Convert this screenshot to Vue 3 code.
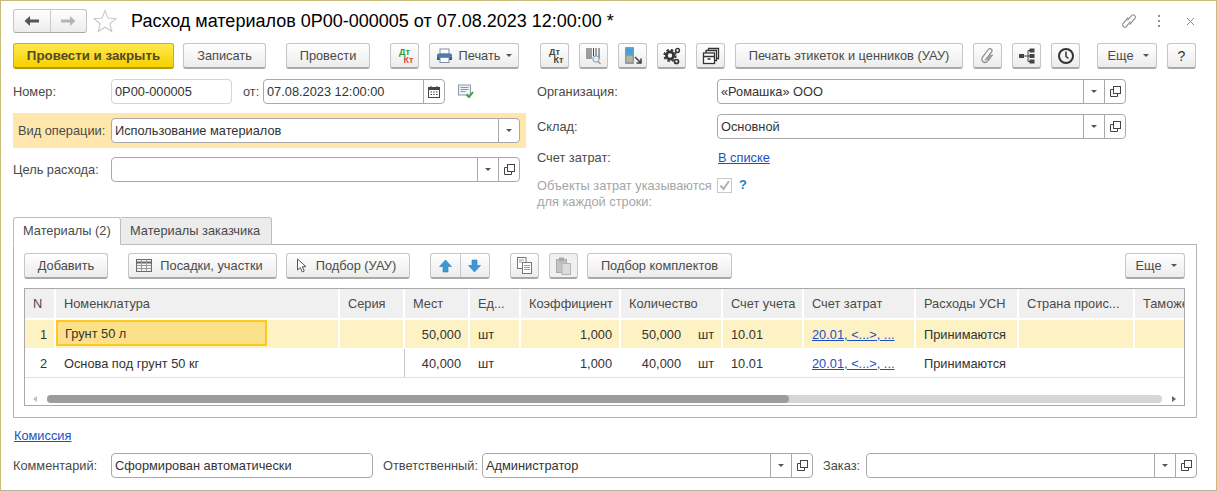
<script setup>
const cols = [
  { key: 'n', title: 'N', w: 31, cls: 'c-n' },
  { key: 'nom', title: 'Номенклатура', w: 284 },
  { key: 'ser', title: 'Серия', w: 65 },
  { key: 'mest', title: 'Мест', w: 65, align: 'r' },
  { key: 'ed', title: 'Ед...', w: 51 },
  { key: 'kf', title: 'Коэффициент', w: 100, align: 'r' },
  { key: 'qty', title: 'Количество', w: 102, kind: 'qty' },
  { key: 'su', title: 'Счет учета', w: 81 },
  { key: 'sz', title: 'Счет затрат', w: 112, kind: 'link' },
  { key: 'us', title: 'Расходы УСН', w: 103 },
  { key: 'st', title: 'Страна проис...', w: 116 },
  { key: 'tm', title: 'Таможе', w: 60 }
]
const template = cols.map(c => c.w + 'px').join(' ')
const rows = [
  { n: '1', nom: 'Грунт 50 л', ser: '', mest: '50,000', ed: 'шт', kf: '1,000', qty: '50,000', su: '10.01', sz: '20.01, <...>, ...', us: 'Принимаются', st: '', tm: '' },
  { n: '2', nom: 'Основа под грунт 50 кг', ser: '', mest: '40,000', ed: 'шт', kf: '1,000', qty: '40,000', su: '10.01', sz: '20.01, <...>, ...', us: 'Принимаются', st: '', tm: '' }
]
</script>

<template>
  <div class="page">
    <header class="titlebar">
      <div class="nav">
        <span class="nav-b">
          <svg width="16" height="12" viewBox="0 0 16 12"><path d="M0.5 6 6 1v3.4h9v3.2H6V11z" fill="#555"/></svg>
        </span>
        <span class="nav-b nav-r">
          <svg width="16" height="12" viewBox="0 0 16 12"><path d="M15.5 6 10 1v3.4H1v3.2h9V11z" fill="#b5b5b5"/></svg>
        </span>
      </div>
      <svg class="star" width="24" height="24" viewBox="0 0 24 24"><path d="M12 1.5l3 7.6 8 .6-6.200 5 2 7.800L12 18.200 5.200 22.500l2-7.800L1 9.700l8-.6z" fill="#fff" stroke="#c9c9c9" stroke-width="1.100"/></svg>
      <h1 class="title">Расход материалов 0Р00-000005 от 07.08.2023 12:00:00 *</h1>
      <div class="win-icons">
        <svg width="16" height="18" viewBox="0 0 16 18" fill="none" stroke="#8a8a8a" stroke-width="1.100"><path d="M6.500 8.500 10.800 3.300a2.200 2.200 0 0 1 3.300 2.800L8.700 12.600M9.500 9.500 5.200 14.700a2.200 2.200 0 0 1-3.300-2.800L7.300 5.400"/></svg>
        <svg class="dots" width="4" height="14" viewBox="0 0 4 14" fill="#8f8f8f"><rect x="1" y="1" width="2" height="2"/><rect x="1" y="6" width="2" height="2"/><rect x="1" y="11" width="2" height="2"/></svg>
        <svg class="close" width="9" height="9" viewBox="0 0 9 9" stroke="#8a8a8a" stroke-width="1"><path d="M1 1l7 7M8 1l-7 7"/></svg>
      </div>
    </header>

    <nav class="cmdbar">
      <button class="btn primary w-post">Провести и закрыть</button>
      <button class="btn w-save ml9">Записать</button>
      <button class="btn w-conduct ml20">Провести</button>
      <button class="btn ib ml20">
        <span class="dk"><i class="dk-g">Дт</i><i class="dk-r">Кт</i></span>
      </button>
      <button class="btn w-print ml10">
        <svg width="17" height="16" viewBox="0 0 17 16"><rect x="4" y="1" width="9" height="5" fill="#fff" stroke="#7a8ea5"/><rect x="1" y="5.500" width="15" height="6.500" rx="1.500" fill="#4e7ba8"/><rect x="1" y="9.500" width="15" height="2.500" fill="#2e5a88"/><rect x="4" y="9.500" width="9" height="5" fill="#fff" stroke="#7a8ea5"/></svg>
        <span class="pl6">Печать</span><span class="caret cm"></span>
      </button>
      <button class="btn ib ml21">
        <span class="dk dk-b"><i>Дт</i><i>Кт</i></span>
      </button>
      <button class="btn ib ml10">
        <svg width="16" height="18" viewBox="0 0 16 18"><path d="M1 1v11M3 1v11M5 1v11M7.500 1v8M10 1v8M13 1v11" stroke="#444" fill="none"/><circle cx="10" cy="12" r="3.200" fill="#e4eef6" stroke="#7c9cb8"/><path d="M12 14.500l2.500 2.500" stroke="#c79a4c" stroke-width="1.600"/></svg>
      </button>
      <button class="btn ib ml10">
        <svg width="20" height="20" viewBox="0 0 20 20"><rect x="2" y="1" width="9" height="17" rx="1" fill="#8d9aa5"/><rect x="3" y="2.500" width="7" height="6" fill="#3fa3e0"/><path d="M3.500 11h6M3.500 13h6M3.500 15h6" stroke="#e8d28a"/><path d="M12 11l6 6M18 12.500V17h-4.500" stroke="#444" stroke-width="1.600" fill="none"/></svg>
      </button>
      <button class="btn ib ml10">
        <svg width="20" height="20" viewBox="0 0 20 20" fill="none" stroke="#333">
          <circle cx="8" cy="9.500" r="3.600" stroke-width="2.800"/>
          <circle cx="8" cy="9.500" r="5.700" stroke-width="1.800" stroke-dasharray="2.500 2"/>
          <circle cx="15.500" cy="4.500" r="1.900" stroke-width="1.500"/>
          <circle cx="14.500" cy="15.500" r="2" stroke-width="1.700"/>
        </svg>
      </button>
      <button class="btn ib ml10">
        <svg width="18" height="18" viewBox="0 0 18 18" fill="#fff" stroke="#333" stroke-width="1.300"><path d="M6.500 5V1.500h10v10h-2"/><path d="M4 7.500V3.500h10.500v10H13"/><rect x="1.500" y="6" width="11" height="10.500"/><path d="M1.500 9.500h11M5.500 12h3" /></svg>
      </button>
      <button class="btn w-labels ml10">Печать этикеток и ценников (УАУ)</button>
      <button class="btn ib ml10">
        <svg width="16" height="18" viewBox="0 0 16 18" fill="none" stroke="#8c8c8c" stroke-width="1.200"><path d="M5 13.500l6.600-8.600a2 2 0 0 0-3.200-2.400L2.500 10.200a3.200 3.200 0 0 0 5.100 3.900l5-6.500"/><path d="M7 13l4-5.300"/></svg>
      </button>
      <button class="btn ib ml10">
        <svg width="18" height="16" viewBox="0 0 18 16" fill="#444"><rect x="1" y="6" width="5" height="4"/><path d="M6 8h4M10 2.500v11M10 2.500h2M10 8h2M10 13.500h2" stroke="#444" fill="none"/><rect x="11.500" y="0.500" width="5" height="4"/><rect x="11.500" y="6" width="5" height="4"/><rect x="11.500" y="11.500" width="5" height="4"/></svg>
      </button>
      <button class="btn ib ml10">
        <svg width="18" height="18" viewBox="0 0 18 18" fill="none" stroke="#333"><circle cx="9" cy="9" r="7" stroke-width="2"/><path d="M9 4.500V9.500l2.500 2" stroke-width="1.500"/></svg>
      </button>
      <button class="btn w-more ml17">Еще<span class="caret cm2"></span></button>
      <button class="btn ib ml10 qm">?</button>
    </nav>

    <section class="form">
      <div class="col-left">
        <div class="frow">
          <label class="lbl">Номер:</label>
          <div class="inp w-num soft"><span class="val">0Р00-000005</span></div>
          <label class="lbl lbl-from">от:</label>
          <div class="inp w-date">
            <span class="val">07.08.2023 12:00:00</span>
            <span class="addon wide">
              <svg width="12" height="12" viewBox="0 0 12 12"><rect x="0.500" y="1.500" width="11" height="10" fill="#fff" stroke="#444"/><rect x="0.500" y="1.500" width="11" height="2.500" fill="#444"/><path d="M2.500 6h1.500M5.200 6h1.500M8 6h1.500M2.500 8.500h1.500M5.200 8.500h1.500M8 8.500h1.500" stroke="#444"/><path d="M3 0v2M9 0v2" stroke="#444"/></svg>
            </span>
          </div>
          <svg class="note" width="16" height="15" viewBox="0 0 16 15"><rect x="0.500" y="1" width="12" height="10" fill="#eef2f6" stroke="#8a9bac"/><path d="M2.500 3.500h8M2.500 5.500h8M2.500 7.500h5" stroke="#8a9bac"/><path d="M8.500 10.500l2.500 2.500 4-5" stroke="#3ea33e" stroke-width="2" fill="none"/></svg>
        </div>
        <div class="band">
          <label class="lbl lbl-band">Вид операции:</label>
          <div class="inp w-op">
            <span class="val">Использование материалов</span>
            <span class="addon wide"><span class="caret"></span></span>
          </div>
        </div>
        <div class="frow">
          <label class="lbl">Цель расхода:</label>
          <div class="inp w-op">
            <span class="val"></span>
            <span class="addon"><span class="caret"></span></span>
            <span class="addon"><svg class="open" viewBox="0 0 11 11" width="11" height="11" fill="none" stroke="#444"><rect x="3.500" y="0.500" width="7" height="7"/><path d="M3.500 3.500H0.500v7h7v-3" /></svg></span>
          </div>
        </div>
      </div>
      <div class="col-right">
        <div class="frow">
          <label class="lbl lbl-wide">Организация:</label>
          <div class="inp w-org">
            <span class="val">«Ромашка» ООО</span>
            <span class="addon"><span class="caret"></span></span>
            <span class="addon"><svg viewBox="0 0 11 11" width="11" height="11" fill="none" stroke="#444"><rect x="3.500" y="0.500" width="7" height="7"/><path d="M3.500 3.500H0.500v7h7v-3" /></svg></span>
          </div>
        </div>
        <div class="frow mt10">
          <label class="lbl lbl-wide">Склад:</label>
          <div class="inp w-org">
            <span class="val">Основной</span>
            <span class="addon"><span class="caret"></span></span>
            <span class="addon"><svg viewBox="0 0 11 11" width="11" height="11" fill="none" stroke="#444"><rect x="3.500" y="0.500" width="7" height="7"/><path d="M3.500 3.500H0.500v7h7v-3" /></svg></span>
          </div>
        </div>
        <div class="frow-text">
          <label class="lbl lbl-wide">Счет затрат:</label>
          <a class="link link-list">В списке</a>
        </div>
        <div class="frow-check">
          <label class="lbl lbl-wide lbl-dis">Объекты затрат указываются<br>для каждой строки:</label>
          <span class="check">
            <svg width="13" height="13" viewBox="0 0 13 13"><path d="M2.500 6.500l3 3.500 5.500-8" stroke="#b5b5b5" stroke-width="2.200" fill="none"/></svg>
          </span>
          <span class="hint">?</span>
        </div>
      </div>
    </section>

    <div class="tabs">
      <div class="tab active">Материалы (2)</div>
      <div class="tab">Материалы заказчика</div>
    </div>
    <section class="panel">
      <div class="tbar">
        <button class="btn w-add">Добавить</button>
        <button class="btn w-pos ml20">
          <svg width="16" height="13" viewBox="0 0 16 13" fill="none" stroke="#666"><rect x="0.500" y="0.500" width="15" height="12"/><path d="M0.500 3.500h15" stroke-width="2"/><path d="M0.500 6.500h15M0.500 9.500h15M5.500 0.500v12M10.500 0.500v12" stroke="#999"/></svg>
          <span class="pl8">Посадки, участки</span>
        </button>
        <button class="btn w-pick ml9">
          <svg width="12" height="16" viewBox="0 0 12 16"><path d="M1.500 1v11l2.800-2.500 2 4.500 2-1-2-4.300h3.700z" fill="#fff" stroke="#555"/></svg>
          <span class="pl8">Подбор (УАУ)</span>
        </button>
        <div class="arrows ml20">
          <span class="arrow-b"><svg width="13" height="14" viewBox="0 0 13 14"><path d="M6.500 1 12.500 7.500H9V13H4V7.500H.5z" fill="#3d97d9" stroke="#2b7cb8" stroke-width=".6"/></svg></span>
          <span class="arrow-b sep"><svg width="13" height="14" viewBox="0 0 13 14"><path d="M6.500 13 12.500 6.500H9V1H4v5.500H.5z" fill="#3d97d9" stroke="#2b7cb8" stroke-width=".6"/></svg></span>
        </div>
        <button class="btn ib ml20">
          <svg width="15" height="17" viewBox="0 0 15 17" fill="#fff" stroke="#777"><rect x="0.500" y="0.500" width="8.500" height="11"/><rect x="5.500" y="5.500" width="9" height="11"/><path d="M2 3h5M2 5h3M7 8.500h6M7 10.500h6M7 12.500h6" stroke="#999"/></svg>
        </button>
        <button class="btn ib ml10 dis">
          <svg width="15" height="18" viewBox="0 0 15 18"><rect x="0.500" y="2.500" width="10" height="13" fill="#c4c4c4" stroke="#aaa"/><rect x="3" y="0.500" width="5" height="4" fill="#aaa"/><rect x="6" y="6.500" width="8.500" height="11" fill="#dcdcdc" stroke="#b5b5b5"/></svg>
        </button>
        <button class="btn w-kits ml9">Подбор комплектов</button>
        <button class="btn w-more2 push">Еще<span class="caret cm2"></span></button>
      </div>

      <div class="grid-wrap">
        <div class="grid-row head" :style="{ gridTemplateColumns: template }">
          <div v-for="c in cols" :key="c.key" class="hcell" :class="c.cls">{{ c.title }}</div>
        </div>
        <div
          v-for="(r, i) in rows"
          :key="r.n"
          class="grid-row body"
          :class="{ selected: i === 0 }"
          :style="{ gridTemplateColumns: template }"
        >
          <div
            v-for="c in cols"
            :key="c.key"
            class="cell"
            :class="[c.align === 'r' ? 'right' : '', 'k-' + c.key, i === 0 && c.key === 'nom' ? 'has-active' : '']"
          >
            <template v-if="c.kind === 'qty'">
              <span class="qty">{{ r[c.key] }}</span><span class="unit">шт</span>
            </template>
            <a v-else-if="c.kind === 'link'" class="link">{{ r[c.key] }}</a>
            <span v-else-if="i === 0 && c.key === 'nom'" class="active-cell">{{ r[c.key] }}</span>
            <template v-else>{{ r[c.key] }}</template>
          </div>
        </div>
        <div class="scroll">
          <span class="sc-l"></span>
          <div class="track"><div class="thumb"></div></div>
          <span class="sc-r"></span>
        </div>
      </div>
    </section>

    <a class="link komis">Комиссия</a>

    <footer class="bottom">
      <label class="lbl">Комментарий:</label>
      <div class="inp w-com"><span class="val">Сформирован автоматически</span></div>
      <label class="lbl lbl-resp">Ответственный:</label>
      <div class="inp w-resp">
        <span class="val">Администратор</span>
        <span class="addon"><span class="caret"></span></span>
        <span class="addon"><svg viewBox="0 0 11 11" width="11" height="11" fill="none" stroke="#444"><rect x="3.500" y="0.500" width="7" height="7"/><path d="M3.500 3.500H0.500v7h7v-3" /></svg></span>
      </div>
      <label class="lbl lbl-order">Заказ:</label>
      <div class="inp w-order">
        <span class="val"></span>
        <span class="addon"><span class="caret"></span></span>
        <span class="addon"><svg viewBox="0 0 11 11" width="11" height="11" fill="none" stroke="#444"><rect x="3.500" y="0.500" width="7" height="7"/><path d="M3.500 3.500H0.500v7h7v-3" /></svg></span>
      </div>
    </footer>
  </div>
</template>

<style scoped>
* { box-sizing: border-box; }
.page {
  width: 1217px; height: 491px; background: #fff;
  border: 1px solid #c8bb78; border-bottom-color: #b9b59a;
  padding: 0 19px 0 12px; overflow: hidden;
  font: 12.8px "Liberation Sans", Arial, sans-serif; color: #4a4a4a;
}
.titlebar { display: flex; align-items: center; height: 24px; margin-top: 8px; }
.nav { display: flex; width: 74px; height: 24px; border: 1px solid #c4c4c4; border-bottom-color: #a8a8a8; border-radius: 3px; background: linear-gradient(#fff, #ececec); }
.nav-b { flex: 1; display: flex; align-items: center; justify-content: center; }
.nav-r { border-left: 1px solid #c9c9c9; }
.star { margin-left: 6px; }
.title { margin: 0 0 0 14px; font: 400 18px "Liberation Sans", Arial, sans-serif; color: #000; white-space: nowrap; }
.win-icons { margin-left: auto; display: flex; align-items: center; margin-right: 0; }
.dots { margin-left: 20px; }
.close { margin-left: 25px; margin-right: 2px; }

.cmdbar { display: flex; height: 26px; margin-top: 10px; margin-right: -10px; }
.btn {
  height: 26px; padding: 0; display: inline-flex; align-items: center; justify-content: center; flex: none;
  border: 1px solid #c6c6c6; border-bottom: 2px solid #a9a9a9; border-radius: 3px;
  background: linear-gradient(#fff, #ececec);
  font: 12.8px "Liberation Sans", Arial, sans-serif; color: #4a4a4a;
}
.primary { background: linear-gradient(#ffe94f, #f7d000); border-color: #cdb000; border-bottom-color: #b39a00; font-weight: 700; font-size: 13.3px; color: #54492a; }
.ib { width: 29px; }
.w-post { width: 161px; }
.w-save { width: 83px; }
.w-conduct { width: 84px; }
.w-print { width: 90px; }
.w-labels { width: 228px; }
.w-more { width: 60px; padding-left: 2px; }
.w-add { width: 84px; }
.w-pos { width: 149px; padding-right: 6px; }
.w-pick { width: 124px; padding-right: 4px; }
.w-kits { width: 145px; }
.w-more2 { width: 60px; padding-left: 2px; }
.ml9 { margin-left: 9px; }
.ml10 { margin-left: 10px; }
.ml17 { margin-left: 17px; }
.ml20 { margin-left: 20px; }
.ml21 { margin-left: 21px; }
.pl6 { padding-left: 6px; }
.pl8 { padding-left: 8px; }
.push { margin-left: auto; }
.qm { font-size: 14px; color: #333; }
.dis { background: #f0f0f0; }
.caret { display: inline-block; width: 0; height: 0; border: 3px solid transparent; border-top: 3px solid #555; border-bottom: 0; }
.cm { margin-left: 6px; }
.cm2 { margin-left: 9px; }
.dk { display: flex; flex-direction: column; width: 18px; line-height: 8px; font-size: 9px; font-weight: 700; font-style: normal; }
.dk i { font-style: normal; }
.dk i:last-child { align-self: flex-end; }
.dk-g { color: #1f9d3f; }
.dk-r { color: #e2463f; }
.dk-b { color: #444; }

.form { display: flex; height: 138px; margin-top: 10px; }
.col-left { width: 513px; }
.col-right { margin-left: 11px; }
.frow { display: flex; align-items: center; height: 25px; }
.lbl { width: 98px; flex: none; white-space: nowrap; color: #4a4a4a; }
.lbl-from { width: 31px; padding-left: 11px; }
.lbl-wide { width: 180px; }
.inp { display: flex; height: 25px; flex: none; border: 1px solid #a9a9a9; border-radius: 4px; background: #fff; color: #333; align-items: stretch; }
.soft { border-color: #d4d4d4; }
.val { flex: 1; padding-left: 3px; line-height: 24px; white-space: nowrap; overflow: hidden; }
.addon { width: 21px; flex: none; display: flex; align-items: center; justify-content: center; border-left: 1px solid #a9a9a9; }
.addon.wide { width: 21px; }
.w-num { width: 121px; }
.w-date { width: 182px; }
.w-op { width: 409px; }
.w-org { width: 409px; }
.note { margin-left: 13px; }
.band { display: flex; align-items: center; height: 35px; margin: 9px 0; background: #fee6ad; }
.lbl-band { padding-left: 5px; }
.mt10 { margin-top: 10px; }
.frow-text { display: flex; align-items: center; height: 16px; margin-top: 10px; }
.frow-check { display: flex; align-items: flex-start; margin-top: 12px; line-height: 16px; }
.lbl-dis { color: #a6a6a6; padding-top: 1px; }
.check { width: 15px; height: 15px; margin-top: 1px; border: 1px solid #c8c8c8; display: flex; align-items: center; justify-content: center; }
.hint { margin-left: 7px; color: #1a7fbf; font-weight: 700; }
.link { color: #1d4fc4; text-decoration: underline; white-space: nowrap; }
.link-list { margin-left: 1px; }

.tabs { display: flex; height: 28px; margin-bottom: -1px; position: relative; }
.tab { height: 28px; padding: 0 9px; line-height: 26px; width: 151px; background: #ececec; border: 1px solid #bdbdbd; border-left: 0; border-radius: 0 3px 0 0; color: #4a4a4a; white-space: nowrap; }
.tab.active { width: 108px; background: #fff; border: 1px solid #bdbdbd; border-bottom-color: #fff; border-radius: 3px 3px 0 0; }
.panel { width: 1184px; height: 174px; border: 1px solid #b5b5b5; padding: 8px 11px 0 10px; }
.tbar { display: flex; height: 26px; }
.arrows { display: flex; width: 60px; height: 26px; border: 1px solid #c6c6c6; border-bottom: 2px solid #a9a9a9; border-radius: 3px; background: linear-gradient(#fff, #ececec); }
.arrow-b { flex: 1; display: flex; align-items: center; justify-content: center; }
.arrow-b.sep { border-left: 1px solid #c9c9c9; }
.grid-wrap { position: relative; margin-top: 9px; height: 118px; border: 1px solid #a9a9a9; overflow: hidden; }
.grid-row { display: grid; }
.head { height: 31px; background: #f0f0f0; border-bottom: 2px solid #fff; }
.hcell { border-right: 2px solid #fff; padding-left: 8px; line-height: 29px; white-space: nowrap; overflow: hidden; color: #4a4a4a; }
.c-n { padding-left: 8px; }
.body { height: 29px; border-bottom: 1px solid #e0e0e0; }
.selected { background: #fdf2c4; border-bottom-color: #fff; height: 29px; }
.cell { padding: 0 8px; line-height: 29px; white-space: nowrap; overflow: hidden; color: #333; border-right: 2px solid #fff; }
.right { text-align: right; padding-right: 7px; }
.k-n { text-align: right; padding-right: 7px; }
.k-ser { border-right: 1px solid #c8c8c8; }
.selected .k-ser { border-right: 2px solid #fff; }
.k-qty { display: flex; padding-right: 0; }
.qty { width: 52px; text-align: right; }
.unit { margin-left: 17px; }
.has-active { padding: 0; overflow: visible; }
.active-cell { display: block; width: 211px; height: 26px; line-height: 24px; padding-left: 7px; background: #fde08a; border: 2px solid #fdc81f; }
.scroll { position: absolute; left: 0; right: 0; bottom: 2px; height: 8px; display: flex; align-items: center; }
.track { position: absolute; left: 22px; right: 22px; height: 8px; border-radius: 4px; background: #d6d6d6; }
.thumb { width: 742px; height: 8px; border-radius: 4px; background: #9c9c9c; }
.sc-l { position: absolute; left: 8px; border: 3px solid transparent; border-right: 4px solid #c0c0c0; border-left: 0; }
.sc-r { position: absolute; right: 8px; border: 3px solid transparent; border-left: 4px solid #666; border-right: 0; }

.komis { display: block; width: max-content; margin: 10px 0 0 1px; line-height: 16px; }
.bottom { display: flex; align-items: center; height: 25px; margin-top: 9px; }
.w-com { width: 262px; }
.lbl-resp { width: 99px; margin-left: 10px; }
.w-resp { width: 331px; }
.lbl-order { width: 43px; margin-left: 10px; }
.w-order { width: 331px; }
</style>
